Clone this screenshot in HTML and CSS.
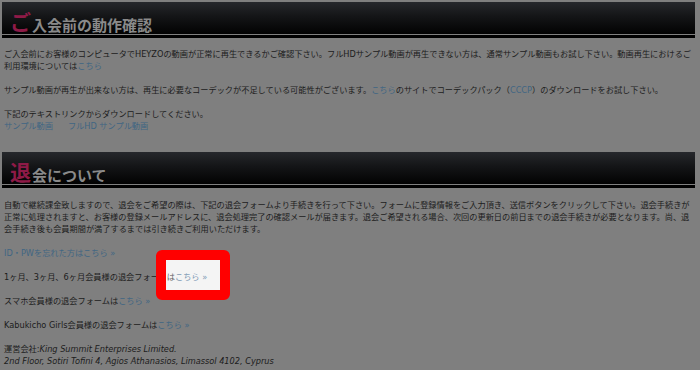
FILE: index.html
```html
<!DOCTYPE html>
<html lang="ja">
<head>
<meta charset="utf-8">
<title>入会前の動作確認</title>
<link rel="stylesheet" href="styles.css">
</head>
<body>
<div class="page">
  <section class="section">
    <h2 class="section-title"><span class="initial">ご</span><span class="rest">入会前の動作確認</span></h2>
    <div class="section-body">
      <p>ご入会前にお客様のコンピュータでHEYZOの動画が正常に再生できるかご確認下さい。フルHDサンプル動画が再生できない方は、通常サンプル動画もお試し下さい。動画再生におけるご利用環境については<a href="#">こちら</a></p>
      <p>サンプル動画が再生が出来ない方は、再生に必要なコーデックが不足している可能性がございます。<a href="#">こちら</a>のサイトでコーデックパック（<a href="#">CCCP</a>）のダウンロードをお試し下さい。</p>
      <div class="downloads">
        <p>下記のテキストリンクからダウンロードしてください。</p>
        <div class="download-links"><a href="#">サンプル動画</a><a href="#">フルHD サンプル動画</a></div>
      </div>
    </div>
  </section>
  <section class="section">
    <h2 class="section-title"><span class="initial">退</span><span class="rest">会について</span></h2>
    <div class="section-body">
      <p>自動で継続課金致しますので、退会をご希望の際は、下記の退会フォームより手続きを行って下さい。フォームに登録情報をご入力頂き、送信ボタンをクリックして下さい。退会手続きが正常に処理されますと、お客様の登録メールアドレスに、退会処理完了の確認メールが届きます。退会ご希望される場合、次回の更新日の前日までの退会手続きが必要となります。尚、退会手続き後も会員期間が満了するまでは引き続きご利用いただけます。</p>
      <p><a href="#">ID・PWを忘れた方はこちら »</a></p>
      <p>1ヶ月、3ヶ月、6ヶ月会員様の退会フォーム<span class="spotlight">は<a href="#">こちら »</a></span></p>
      <p>スマホ会員様の退会フォームは<a href="#">こちら »</a></p>
      <p>Kabukicho Girls会員様の退会フォームは<a href="#">こちら »</a></p>
      <p class="company">運営会社:<em>King Summit Enterprises Limited.<br>2nd Floor, Sotiri Tofini 4, Agios Athanasios, Limassol 4102, Cyprus</em></p>
    </div>
  </section>
</div>
</body>
</html>
```

FILE: styles.css
```css
html, body {
  margin: 0;
  padding: 0;
  background: #7f7f7f;
}

body {
  width: 700px;
  height: 370px;
  overflow: hidden;
  font-family: "DejaVu Sans", "Noto Sans CJK JP", sans-serif;
  font-size: 8.2px;
  line-height: 12px;
  color: #1c1c1c;
}

.page {
  padding: 2px 5px 0 2px;
}

.section + .section {
  margin-top: 20px;
}

.section-title {
  margin: 0 0 4px;
  height: 32px;
  box-sizing: border-box;
  display: flex;
  align-items: flex-end;
  padding: 0 0 2px 8px;
  background: linear-gradient(to bottom, #26282c 0%, #141517 45%, #020202 100%);
  font-family: "Noto Sans CJK JP", sans-serif;
  font-weight: bold;
  line-height: 1;
  position: relative;
}

.section-title::after {
  content: "";
  position: absolute;
  left: 0;
  right: 0;
  bottom: -4px;
  height: 3px;
  background: #000;
}

.initial {
  font-size: 21px;
  color: #8e1a47;
}

.rest {
  font-size: 15px;
  color: #8a8a8a;
  margin-left: 1px;
}

.section-body {
  padding: 10px 0 0 2px;
}

.section:last-child .section-body {
  padding-top: 11px;
}

p {
  margin: 0 0 12px;
}

.downloads p {
  margin: 0;
}

.download-links {
  display: flex;
  gap: 15px;
}

a {
  color: #3f6683;
  text-decoration: none;
}

.company em {
  font-style: italic;
}

.spotlight {
  position: relative;
  z-index: 1;
  display: inline-block;
  color: #666;
}

.spotlight a {
  color: #7f9ab5;
}

.spotlight::before {
  content: "";
  position: absolute;
  z-index: -1;
  left: -11px;
  top: -21px;
  width: 54px;
  height: 30px;
  background: #f4f4f4;
  border: 10px solid #ff0000;
  border-radius: 6px;
}
```
